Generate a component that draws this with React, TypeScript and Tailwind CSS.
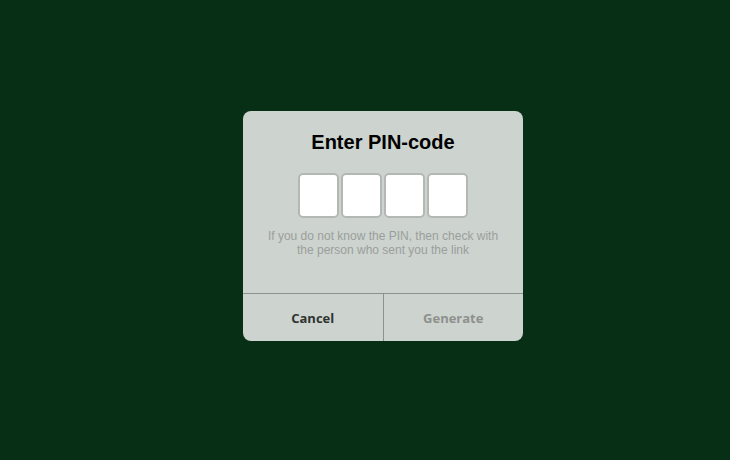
import React from "react";

export default function App() {
  return (
    <div className="w-[730px] h-[460px] bg-[#072f15] pt-[111px] pl-[243px]">
      <div className="w-[280px] h-[230px] bg-[#cdd3cf] rounded-[8px] flex flex-col overflow-hidden">
        <div className="pt-[19px] text-center text-[20px] leading-[24px] font-bold text-black [font-family:'Liberation_Sans',Arial,sans-serif]">
          Enter PIN-code
        </div>
        <div className="mt-[19px] flex justify-center gap-[2px]">
          {[0, 1, 2, 3].map((i) => (
            <div
              key={i}
              className="w-[41px] h-[45px] bg-white border-2 border-[#b4b8b5] rounded-[5px]"
            />
          ))}
        </div>
        <div className="mt-[11px] px-[20px] text-center text-[12px] leading-[14px] text-[#9a9f9b] [font-family:'Liberation_Sans',Arial,sans-serif]">
          If you do not know the PIN, then check with
          <br />
          the person who sent you the link
        </div>
        <div className="flex-1" />
        <div className="h-[48px] border-t border-[#8e928f] flex">
          <div className="flex-1 flex items-center justify-center pt-[2px] text-[13px] font-bold text-[#2f3331] [font-family:'Open_Sans',sans-serif]">
            Cancel
          </div>
          <div className="w-px bg-[#8e928f]" />
          <div className="flex-1 flex items-center justify-center pt-[2px] text-[13px] font-bold text-[#8d918e] [font-family:'Open_Sans',sans-serif]">
            Generate
          </div>
        </div>
      </div>
    </div>
  );
}
